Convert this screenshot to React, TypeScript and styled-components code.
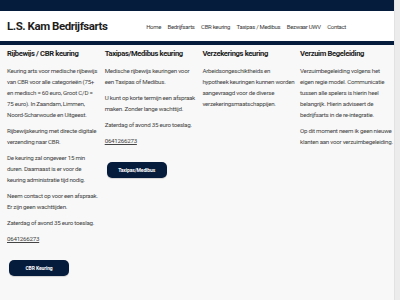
import { Fragment } from 'react';
import styled, { createGlobalStyle } from 'styled-components';

const navy = '#051c3c';

const GlobalStyle = createGlobalStyle`
  html, body {
    margin: 0;
    padding: 0;
    overflow: hidden;
  }
  body {
    background: #f8f8f8;
    font-family: Roboto, "Liberation Sans", sans-serif;
    color: #444;
  }
`;

// each paragraph is kept as the lines it shows in the design
type Column = {
  title: string;
  paragraphs: string[][];
  phone?: string;
  button?: string;
};

const columns: Column[] = [
  {
    title: 'Rijbewijs / CBR keuring',
    paragraphs: [
      [
        'Keuring arts voor medische rijbewijs',
        'van CBR voor alle categorieën (75+',
        'en medisch = 60 euro, Groot C/D =',
        '75 euro). In Zaandam, Limmen,',
        'Noord-Scharwoude en Uitgeest.',
      ],
      ['Rijbewijskeuring met directe digitale', 'verzending naar CBR.'],
      ['De keuring zal ongeveer 15 min', 'duren. Daarnaast is er voor de', 'keuring administratie tijd nodig.'],
      ['Neem contact op voor een afspraak.', 'Er zijn geen wachttijden.'],
      ['Zaterdag of avond 35 euro toeslag.'],
    ],
    phone: '0641266273',
    button: 'CBR Keuring',
  },
  {
    title: 'Taxipas/Medibus keuring',
    paragraphs: [
      ['Medische rijbewijs keuringen voor', 'een Taxipas of Medibus.'],
      ['U kunt op korte termijn een afspraak', 'maken. Zonder lange wachttijd.'],
      ['Zaterdag of avond 35 euro toeslag.'],
    ],
    phone: '0641266273',
    button: 'Taxipas/Medibus',
  },
  {
    title: 'Verzekerings keuring',
    paragraphs: [
      [
        'Arbeidsongeschiktheids en',
        'hypotheek keuringen kunnen worden',
        'aangevraagd voor de diverse',
        'verzekeringsmaatschappijen.',
      ],
    ],
  },
  {
    title: 'Verzuim Begeleiding',
    paragraphs: [
      [
        'Verzuimbegeleiding volgens het',
        'eigen regie model. Communicatie',
        'tussen alle spelers is hierin heel',
        'belangrijk. Hierin adviseert de',
        'bedrijfsarts in de re-integratie.',
      ],
      ['Op dit moment neem ik geen nieuwe', 'klanten aan voor verzuimbegeleiding.'],
    ],
  },
];

const navItems = ['Home', 'Bedrijfsarts', 'CBR keuring', 'Taxipas / Medibus', 'Bezwaar UWV', 'Contact'];

export default function App() {
  return (
    <Shell>
      <GlobalStyle />
      <Main>
        <TopBar />
        <Header>
          <Logo>L.S. Kam Bedrijfsarts</Logo>
          <Nav>
            {navItems.map((item) => (
              <NavLink key={item} href="#">
                {item}
              </NavLink>
            ))}
          </Nav>
        </Header>
        <Divider />
        <Content>
          {columns.map((col) => (
            <Section key={col.title}>
              <Title>{col.title}</Title>
              {col.paragraphs.map((lines) => (
                <Text key={lines[0]}>
                  {lines.map((line, i) => (
                    <Fragment key={line}>
                      {i > 0 && <br />}
                      {line}
                    </Fragment>
                  ))}
                </Text>
              ))}
              {col.phone && (
                <Text>
                  <Phone href="#">{col.phone}</Phone>
                </Text>
              )}
              {col.button && <ActionButton>{col.button}</ActionButton>}
            </Section>
          ))}
        </Content>
      </Main>
      <ScrollTrack />
    </Shell>
  );
}

const Shell = styled.div`
  display: flex;
  height: 100vh;
`;

const Main = styled.div`
  flex: 1;
  min-width: 0;
  display: flex;
  flex-direction: column;
`;

const ScrollTrack = styled.div`
  width: 5px;
  background: #ececec;
  border-left: 1px solid #e2e2e2;
`;

const TopBar = styled.div`
  height: 11px;
  background: ${navy};
`;

const Header = styled.header`
  height: 30px;
  background: #fff;
  display: flex;
  align-items: center;
  justify-content: space-between;
  padding: 0 48px 0 7px;
`;

const Logo = styled.div`
  font-size: 11.5px;
  font-weight: 700;
  letter-spacing: -0.45px;
  color: #1e1e1e;
`;

const Nav = styled.nav`
  display: flex;
  gap: 6.5px;
`;

const NavLink = styled.a`
  font-size: 6px;
  letter-spacing: -0.32px;
  color: #3a3a3a;
  text-decoration: none;
`;

const Divider = styled.div`
  height: 4px;
  background: ${navy};
`;

const Content = styled.main`
  display: grid;
  grid-template-columns: repeat(4, 91px);
  column-gap: 6.7px;
  padding: 3.5px 0 0 7px;
`;

const Section = styled.section`
  display: flex;
  flex-direction: column;
  align-items: flex-start;
`;

const Title = styled.h2`
  margin: 0 0 7.5px;
  font-size: 7.6px;
  line-height: 10px;
  font-weight: 700;
  letter-spacing: -0.35px;
  color: #1c1c1c;
  white-space: nowrap;
`;

const Text = styled.p`
  margin: 0 0 5px;
  font-size: 6.2px;
  line-height: 11px;
  letter-spacing: -0.26px;
  color: #444;
  white-space: nowrap;
`;

const Phone = styled.a`
  color: #444;
  text-decoration: underline;
`;

const ActionButton = styled.button`
  margin: 10px 0 0 2px;
  width: 60px;
  height: 16px;
  border: none;
  border-radius: 5px;
  background: ${navy};
  color: #fff;
  font-family: inherit;
  font-size: 5px;
  font-weight: 700;
  letter-spacing: -0.1px;
  box-shadow: 0 1px 1px rgba(0, 0, 0, 0.15);
  cursor: pointer;
`;
